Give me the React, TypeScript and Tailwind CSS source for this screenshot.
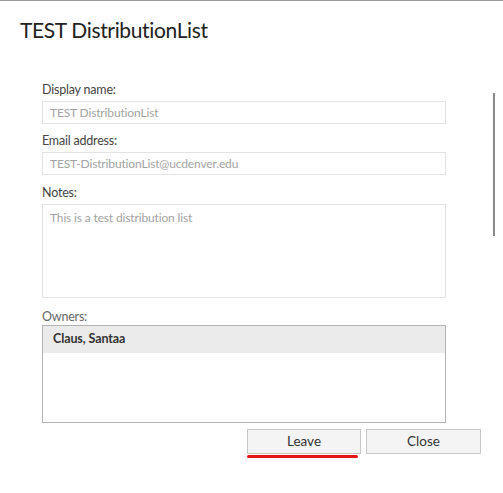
const font = "font-['Segoe_UI','Lato',sans-serif]";

function Field({ label, value, tall }: { label: string; value: string; tall?: boolean }) {
  return (
    <div className="flex flex-col">
      <span className="h-[16px] text-[12.5px] leading-[16px] tracking-[-0.2px] text-[#444]">{label}</span>
      {tall ? (
        <textarea
          readOnly
          value={value}
          className="mt-[3px] h-[94px] w-full resize-none border border-[#e3e3e3] px-[7px] py-[4px] text-[12px] leading-[18px] tracking-[-0.15px] text-[#a3a3a3] outline-none"
        />
      ) : (
        <input
          readOnly
          value={value}
          className="mt-[3px] h-[23px] w-full border border-[#e3e3e3] px-[7px] text-[12px] tracking-[-0.15px] text-[#a3a3a3] outline-none"
        />
      )}
    </div>
  );
}

export default function App() {
  return (
    <div className={`relative h-[493px] w-[503px] overflow-hidden border-t border-[#9a9a9a] bg-white ${font}`}>
      <h1 className="ml-[20px] mt-[14px] text-[21px] leading-[30px] tracking-[-0.35px] text-[#222]">
        TEST DistributionList
      </h1>

      <div className="ml-[42px] mt-[37px] flex w-[404px] flex-col">
        <Field label="Display name:" value="TEST DistributionList" />
        <div className="mt-[9px]">
          <Field label="Email address:" value="TEST-DistributionList@ucdenver.edu" />
        </div>
        <div className="mt-[10px]">
          <Field label="Notes:" value="This is a test distribution list" tall />
        </div>

        <div className="mt-[11px] flex flex-col">
          <span className="h-[16px] text-[12.5px] leading-[16px] tracking-[-0.2px] text-[#666]">Owners:</span>
          <div className="h-[98px] border border-[#b4b4b4]">
            <div className="flex h-[27px] items-center bg-[#ebebec] px-[10px] text-[12.5px] font-bold tracking-[-0.1px] text-[#333]">
              Claus, Santaa
            </div>
          </div>
        </div>
      </div>

      <div className="ml-[247px] mt-[6px] flex gap-[5px]">
        <div className="flex flex-col">
          <button className="h-[25px] w-[114px] border border-[#c8c8c8] bg-[#f4f4f4] text-[13.5px] text-[#333]">
            Leave
          </button>
          <div className="mt-[1px] h-[3px] w-[111px] rounded-full bg-[#e8151b]" />
        </div>
        <button className="h-[25px] w-[115px] border border-[#c8c8c8] bg-[#f4f4f4] text-[13.5px] text-[#333]">
          Close
        </button>
      </div>

      <div className="absolute left-[493px] top-[92px] h-[143px] w-[2px] bg-[#8a8a8a]" />
    </div>
  );
}
